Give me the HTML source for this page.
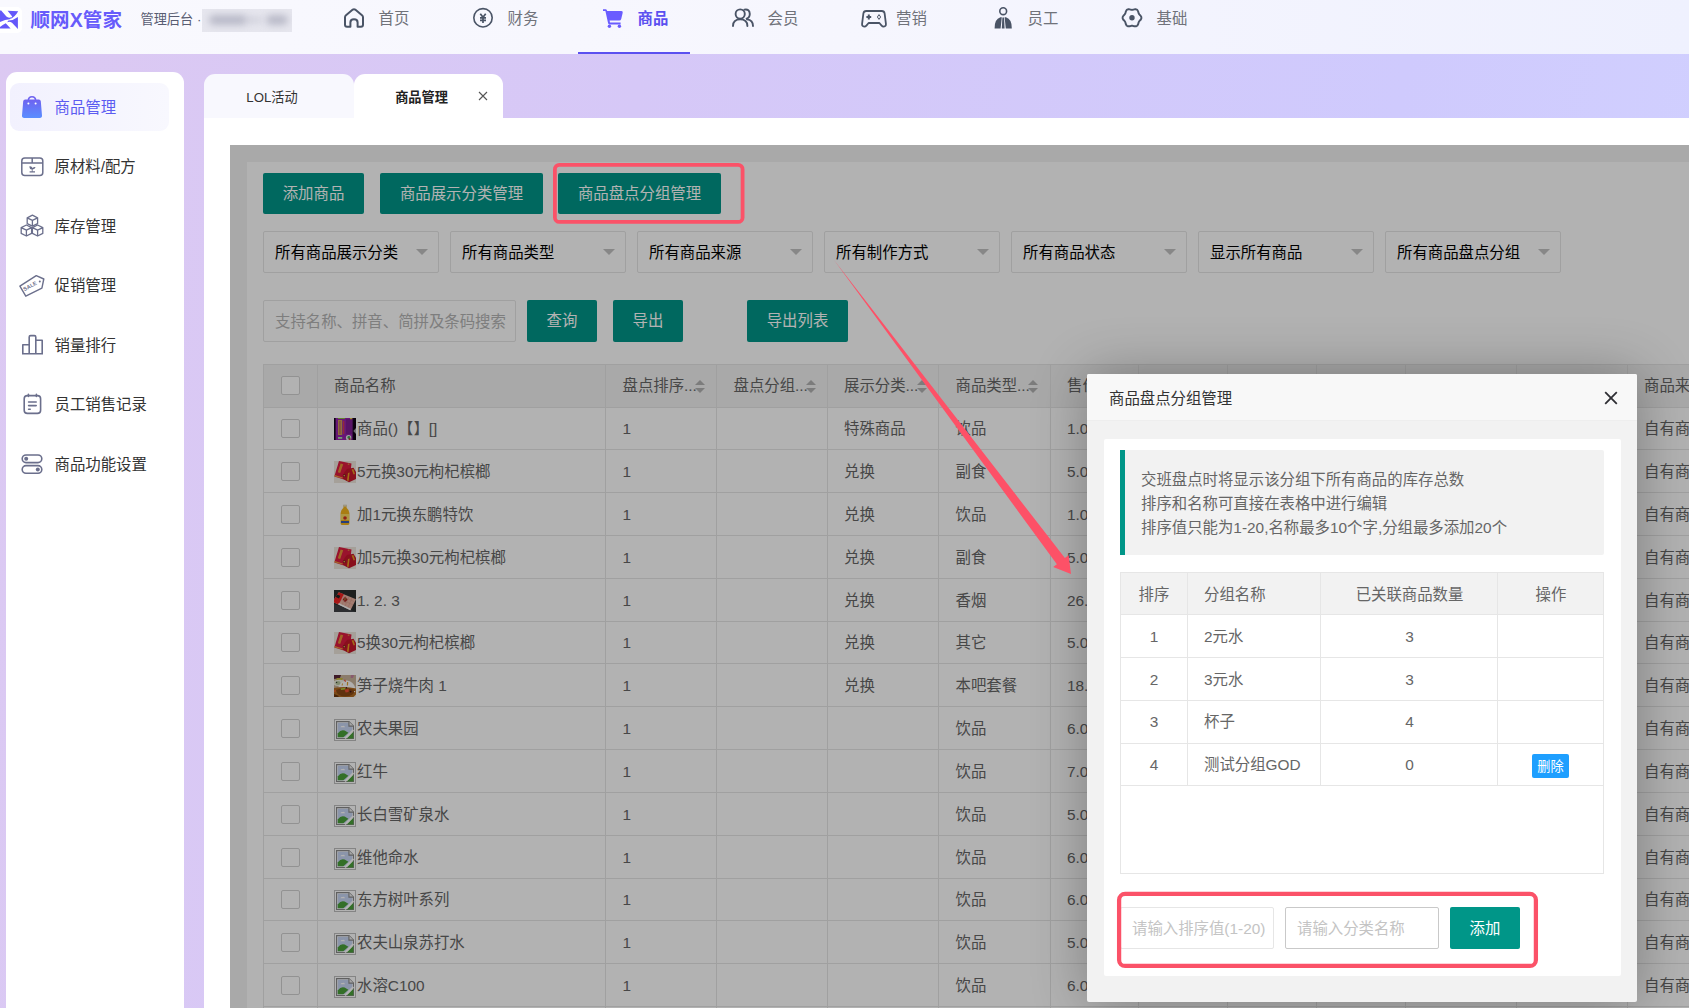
<!DOCTYPE html>
<html lang="zh-CN">
<head>
<meta charset="utf-8">
<title>顺网X管家 - 商品管理</title>
<style>
*{box-sizing:border-box;margin:0;padding:0}
html,body{width:1689px;height:1008px;overflow:hidden}
body{position:relative;font-family:"Liberation Sans","Noto Sans CJK SC",sans-serif;font-size:15.4px;color:#666;
background:linear-gradient(100deg,#dcc9f2 0%,#d6c8f7 35%,#cfcafd 76%,#d1d1ff 100%)}
.abs{position:absolute}
/* header */
#hdr{position:absolute;left:0;top:0;width:1689px;height:54px;background:linear-gradient(90deg,#f9f9fe 0%,#f6f6fe 50%,#eff1fe 100%)}
#logo{position:absolute;left:-4px;top:7px;width:25.600px;height:25.600px;background:#fff;border-radius:5px}
#brand{position:absolute;left:30.5px;top:4px;font-size:19.5px;font-weight:700;color:#675bfb;line-height:32px;letter-spacing:0.1px;white-space:nowrap}
#sub{position:absolute;left:140.5px;top:9.5px;font-size:13.2px;color:#585c72;line-height:20px;white-space:nowrap}
#blur{position:absolute;left:202px;top:9px;width:90px;height:23px;background:#e6e6ee;overflow:hidden}
#blur i{position:absolute;background:#b9bac8;filter:blur(3.5px);border-radius:6px}
.nav{position:absolute;top:0;height:54px;line-height:20px;font-size:15.4px;color:#70727a;white-space:nowrap}
.nav svg{position:absolute;left:0;top:6px}
.nav span{position:absolute;left:35.500px;top:9px}
.nav.on{color:#5b50f0;font-weight:700}
#navline{position:absolute;left:578px;top:52px;width:112px;height:2px;background:#5b50f0}
/* sidebar */
#side{position:absolute;left:6px;top:72px;width:178px;height:950px;background:#fff;border-radius:11px}
.si{position:absolute;left:4px;width:159px;height:48px;border-radius:9px;color:#333;font-size:15.4px;line-height:48px;white-space:nowrap}
.si span{position:absolute;left:44.5px;top:1px}
.si svg{position:absolute;left:9px;top:11.5px}
.si.on{background:linear-gradient(90deg,#f2f1fe,#f8f8fe);color:#5c5cf1}
/* tabs */
#tab1{position:absolute;left:204px;top:74px;width:150px;height:44px;background:#f8f8fe;border-radius:11px 11px 0 0;color:#333;font-size:13.2px;line-height:47px;text-align:center;padding-right:14px}
#tab2{position:absolute;left:354px;top:74px;width:149px;height:44px;background:#fff;border-radius:11px 11px 0 0;color:#222;font-size:13.2px;line-height:47px;font-weight:700;text-align:center;padding-right:14px}
#tabx{position:absolute;left:478px;top:91px}
#content{position:absolute;left:204px;top:118px;width:1485px;height:890px;background:#fff}
/* frame */
#frame{position:absolute;left:230px;top:145px;width:1459px;height:863px;background:#f2f2f2;overflow:hidden}
#fw{position:absolute;left:-230px;top:-145px;width:1689px;height:1008px}
#card{position:absolute;left:247px;top:162px;width:1500px;height:900px;background:#fff}
#shade{position:absolute;left:0;top:0;width:100%;height:100%;background:rgba(0,0,0,.3)}
.btn{position:absolute;height:42px;line-height:42px;background:#009688;color:#fff;font-size:15.4px;text-align:center;border-radius:2px;white-space:nowrap}
.sel{position:absolute;top:231px;width:176px;height:42px;border:1px solid #e6e6e6;border-radius:2px;background:#fff;color:#000;line-height:42px;padding-left:11px;white-space:nowrap}
.sel i{position:absolute;right:10px;top:17px;border:6.6px solid transparent;border-top-color:#c2c2c2;border-bottom:0}
#search{position:absolute;left:263px;top:300px;width:253px;height:42px;border:1px solid #e6e6e6;border-radius:2px;background:#fff;color:#b5b5b5;line-height:42px;padding-left:11px;white-space:nowrap;overflow:hidden}
/* table */
#thead{position:absolute;left:263px;top:364px;width:1500px;height:44px;background:#f2f2f2;border:1px solid #e6e6e6}
.vl{position:absolute;top:364px;width:1px;height:700px;background:#e6e6e6}
.hl{position:absolute;left:263px;width:1500px;height:1px;background:#e6e6e6}
.th{position:absolute;top:364px;height:44px;line-height:44.5px;color:#666;white-space:nowrap}
.td{position:absolute;height:43px;line-height:44px;color:#666;white-space:nowrap}
.cb{position:absolute;left:281px;width:19px;height:19px;border:1px solid #d2d2d2;border-radius:2px;background:#fff}
.sort{position:absolute;top:380px;width:11px;height:14px}
.sort:before{content:"";position:absolute;left:0;top:0;border:5.5px solid transparent;border-bottom-color:#b2b2b2;border-top:0}
.sort:after{content:"";position:absolute;left:0;top:8px;border:5.5px solid transparent;border-top-color:#b2b2b2;border-bottom:0}
.thumb{position:absolute;left:334px;width:22px;height:22px;overflow:hidden}
.brk{position:absolute;left:334px;width:22px;height:22px;border:1px solid #bdbdbd;background:#fff;overflow:hidden}
/* modal */
#modal{position:absolute;left:1087px;top:374px;width:550px;height:628px;background:#f2f2f2;box-shadow:1px 1px 55px rgba(0,0,0,.3);border-radius:2px}
#mtitle{position:absolute;left:0;top:0;width:550px;height:47px;background:#f8f8f8;border-bottom:1px solid #eee;line-height:49px;padding-left:22px;color:#333;font-size:15.4px;border-radius:2px 2px 0 0}
#mcard{position:absolute;left:17px;top:65px;width:517px;height:537px;background:#fff;border-radius:2px}
#quote{position:absolute;left:33px;top:76px;width:484px;height:105px;background:#f2f2f2;border-left:5.5px solid #009688;border-radius:0 2px 2px 0;padding:17.5px 0 0 16px;line-height:24px;color:#666;white-space:nowrap}
#mtbl{position:absolute;left:33px;top:198px;width:484px;height:302px;border:1px solid #e6e6e6;background:#fff}
#mth{position:absolute;left:0;top:0;width:482px;height:42px;background:#f2f2f2;border-bottom:1px solid #e6e6e6}
.mvl{position:absolute;top:0;width:1px;height:213px;background:#e6e6e6}
.mhl{position:absolute;left:0;width:482px;height:1px;background:#e6e6e6}
.mc{position:absolute;height:42px;line-height:44px;white-space:nowrap;color:#666}
.inp{position:absolute;top:533px;width:154px;height:42px;border:1px solid #e6e6e6;border-radius:2px;background:#fff;color:#c4c4c4;line-height:42px;padding-left:11px;white-space:nowrap;overflow:hidden}
</style>
</head>
<body>
<div id="hdr">
  <div id="logo"></div>
  <svg class="abs" style="left:-3px;top:9px" width="24" height="22" viewBox="-3 9 24 22">
    <path d="M-3 10.600 H1.200 L6.400 16.600 Q8.600 18.600 11.800 17 L9.800 19.200 Q4 19.600 -3 23.400 Z" fill="#6558fa"/>
    <path d="M7.600 10.800 L18.200 11.300 Q14.800 17.400 9.800 19.200 Q11.400 18 12.200 16.600 Z" fill="#6558fa"/>
    <path d="M17.900 17 V29 L12 22.800 Q9.600 21 7.200 22.200 L8.400 20.600 Q13.500 20.400 17.900 17 Z" fill="#6558fa"/>
    <path d="M-3 28.400 H10.600 L5.700 23.200 Q2 25 -1 28 Z" fill="#6558fa"/>
  </svg>
  <div id="brand">顺网X管家</div>
  <div id="sub">管理后台 ·</div>
  <div id="blur"><i style="left:7px;top:6px;width:38px;height:10px"></i><i style="left:64px;top:6px;width:22px;height:10px"></i><i style="left:44px;top:8px;width:16px;height:6px;opacity:.5"></i></div>

  <div class="nav" style="left:343px">
    <svg width="22" height="24" viewBox="0 0 22 24"><path d="M2 11.2 Q2 10 3 9.2 L9.8 3.6 Q11 2.7 12.2 3.6 L19 9.2 Q20 10 20 11.2 L20 18.8 Q20 20.8 18 20.8 L14.6 20.8 L14.6 16.4 Q14.6 13.2 11 13.2 Q7.4 13.2 7.4 16.4 L7.4 20.8 L4 20.8 Q2 20.8 2 18.8 Z" fill="none" stroke="#4a5466" stroke-width="2" stroke-linejoin="round"/></svg>
    <span>首页</span></div>
  <div class="nav" style="left:472px">
    <svg width="22" height="24" viewBox="0 0 22 24"><circle cx="11" cy="11.8" r="9.2" fill="none" stroke="#4a5466" stroke-width="1.6"/><path d="M8.3 7.8 L11 11.3 L13.7 7.8 M8 11.8 H14 M8 14.3 H14 M11 11.3 V17" fill="none" stroke="#4a5466" stroke-width="1.7"/></svg>
    <span>财务</span></div>
  <div class="nav on" style="left:602px">
    <svg width="24" height="24" viewBox="0 0 24 24"><path d="M1 3.2 H3.6 Q4.6 3.2 4.9 4.2 L5.2 5 H19.4 Q21.2 5 20.7 6.8 L19.2 13 Q18.8 14.5 17.2 14.5 H7.6 L8 16.6 H18.6 V18.4 H7.4 Q6.3 18.4 6.1 17.3 L3.4 5 H1 Z" fill="#6a5cff"/><circle cx="7.4" cy="20.2" r="1.7" fill="#6a5cff"/><circle cx="17.4" cy="20.2" r="1.7" fill="#6a5cff"/></svg>
    <span>商品</span></div>
  <div class="nav" style="left:731px">
    <svg width="24" height="24" viewBox="0 0 24 24"><g fill="none" stroke="#4a5466" stroke-width="1.9" stroke-linecap="round"><circle cx="9.2" cy="8" r="4.6"/><path d="M2 20 Q2 13.4 9.2 13.4 Q16.4 13.4 16.4 20"/><path d="M13.4 3.6 Q18.6 2.6 18.8 8 Q18.6 12 15.6 12.6"/><path d="M16 13.4 Q22 14 22 20"/></g></svg>
    <span style="left:36.500px">会员</span></div>
  <div class="nav" style="left:860.500px">
    <svg width="26" height="24" viewBox="0 0 26 24"><path d="M5.2 5 H20.8 Q23.2 5 23.6 7.4 L24.9 17.6 Q25.2 20.6 22.8 20.6 Q21.4 20.6 20.4 19.4 L18.4 17 H7.6 L5.6 19.4 Q4.6 20.6 3.2 20.6 Q0.8 20.6 1.1 17.6 L2.4 7.4 Q2.8 5 5.2 5 Z" fill="none" stroke="#4a5466" stroke-width="1.8" stroke-linejoin="round"/><path d="M5.4 11 H10.2 M7.8 8.6 V13.4" stroke="#4a5466" stroke-width="2" fill="none"/><path d="M18 8.6 L19.6 11 L18 13.4 L16.4 11 Z" fill="none" stroke="#4a5466" stroke-width="1"/></svg>
    <span>营销</span></div>
  <div class="nav" style="left:992px">
    <svg width="22" height="24" viewBox="0 0 22 24"><circle cx="11.2" cy="5.2" r="3.4" fill="none" stroke="#4a5466" stroke-width="1.6"/><path d="M8.4 11.2 L9.8 11.2 L8.6 22.4 H2.6 Q2.4 13 8.4 11.2 Z M14 11.2 L12.6 11.2 L13.8 22.4 H19.8 Q20 13 14 11.2 Z" fill="#4a5466"/><path d="M10.4 11.6 H12 L12.6 22.4 H9.8 Z" fill="#4a5466"/></svg>
    <span>员工</span></div>
  <div class="nav" style="left:1121px">
    <svg width="22" height="24" viewBox="0 0 22 24"><path d="M20.4 11.8 L20.3 12.6 L19.9 13.4 L19.4 14.1 L18.8 14.6 L18.3 15.2 L17.9 15.8 L17.6 16.4 L17.4 17.2 L17.2 18.0 L16.8 18.8 L16.4 19.5 L15.7 20.0 L15.0 20.3 L14.1 20.3 L13.3 20.2 L12.4 20.0 L11.7 19.8 L11.0 19.8 L10.3 19.8 L9.6 20.0 L8.7 20.2 L7.9 20.3 L7.0 20.3 L6.3 20.0 L5.6 19.5 L5.2 18.8 L4.8 18.0 L4.6 17.2 L4.4 16.4 L4.1 15.8 L3.7 15.2 L3.2 14.6 L2.6 14.1 L2.1 13.4 L1.7 12.6 L1.6 11.8 L1.7 11.0 L2.1 10.2 L2.6 9.5 L3.2 9.0 L3.7 8.4 L4.1 7.8 L4.4 7.2 L4.6 6.4 L4.8 5.6 L5.2 4.8 L5.6 4.1 L6.3 3.6 L7.0 3.3 L7.9 3.3 L8.7 3.4 L9.6 3.6 L10.3 3.8 L11.0 3.9 L11.7 3.8 L12.4 3.6 L13.3 3.4 L14.1 3.3 L15.0 3.3 L15.7 3.6 L16.4 4.1 L16.8 4.8 L17.2 5.6 L17.4 6.4 L17.6 7.2 L17.9 7.8 L18.3 8.4 L18.8 9.0 L19.4 9.5 L19.9 10.2 L20.3 11.0 Z" fill="none" stroke="#4a5466" stroke-width="1.900" stroke-linejoin="round"/><circle cx="11" cy="11.800" r="2.700" fill="#4a5466"/></svg>
    <span>基础</span></div>
  <div id="navline"></div>
</div>

<div id="side">
  <div class="si on" style="top:10.600px">
    <svg width="26" height="26" viewBox="0 0 26 26"><defs><linearGradient id="bg1" x1="0" y1="0" x2="0" y2="1"><stop offset="0" stop-color="#6e62f0"/><stop offset="1" stop-color="#5a8eff"/></linearGradient></defs><path d="M9.4 6.6 Q9.4 2.8 13 2.8 Q16.6 2.8 16.6 6.6" fill="none" stroke="#6e62f0" stroke-width="1.6"/><path d="M6.2 5.4 H19.8 Q21.6 5.4 21.8 7.2 L23 21.6 Q23.2 24 20.8 24 H5.2 Q2.8 24 3 21.6 L4.2 7.2 Q4.4 5.4 6.2 5.4 Z" fill="url(#bg1)"/><circle cx="9.4" cy="9.6" r="1" fill="#fff"/><circle cx="16.6" cy="9.6" r="1" fill="#fff"/></svg>
    <span>商品管理</span></div>
  <div class="si" style="top:70.100px">
    <svg width="26" height="26" viewBox="0 0 26 26"><g fill="none" stroke="#6b6f8c" stroke-width="1.5"><rect x="2.8" y="4" width="21" height="17.6" rx="3"/><path d="M2.8 9 H23.8 M13.2 4 V9"/></g><path d="M10.2 12.4 Q12.6 11.6 13.6 14 Q14.6 12.6 16.6 13 Q16 15.4 13.6 15.4 V17.2 H16 V18.4 H10.6 V17.2 H12.8 V15.4 Q10.4 15 10.2 12.4 Z" fill="#6b6f8c"/></svg>
    <span>原材料/配方</span></div>
  <div class="si" style="top:129.600px">
    <svg width="26" height="26" viewBox="0 0 26 26"><g fill="none" stroke="#6b6f8c" stroke-width="1.3" stroke-linejoin="round"><path d="M13.4 2.2 L18.6 4.8 V10.6 L13.4 13.2 L8.2 10.6 V4.8 Z M8.2 4.8 L13.4 7.4 L18.6 4.8 M13.4 7.4 V13.2"/><path d="M7.4 12 L12.6 14.6 V20.4 L7.4 23 L2.2 20.4 V14.6 Z M2.2 14.6 L7.4 17.2 L12.6 14.6 M7.4 17.2 V23"/><path d="M18.6 12 L23.8 14.6 V20.4 L18.6 23 L13.4 20.4 V14.6 Z M13.4 14.6 L18.6 17.2 L23.8 14.6 M18.6 17.2 V23"/></g></svg>
    <span>库存管理</span></div>
  <div class="si" style="top:189.100px">
    <svg width="28" height="26" viewBox="0 0 28 26"><path d="M0.900 13.150 L17.250 2.600 L24.800 6 L22.900 15.200 L6.800 23.200 Z" fill="none" stroke="#6b6f8c" stroke-width="1.400" stroke-linejoin="round"/><circle cx="20.800" cy="8.600" r="1" fill="#6b6f8c"/><text transform="translate(5.600 18.200) rotate(-29)" font-size="5.400" font-weight="700" fill="#6b6f8c" font-family="Liberation Sans,sans-serif">SALE</text></svg>
    <span>促销管理</span></div>
  <div class="si" style="top:248.600px">
    <svg width="28" height="26" viewBox="0 0 28 26"><path d="M3.800 21.800 V12.800 H10.200 M10.200 21.800 V5 Q10.200 3.600 11.600 3.600 H15.400 Q16.800 3.600 16.800 5 V21.800 M16.800 8.200 H23.200 V21.800 M3 21.800 H24" fill="none" stroke="#6b6f8c" stroke-width="1.600" stroke-linejoin="round"/></svg>
    <span>销量排行</span></div>
  <div class="si" style="top:307.600px">
    <svg width="26" height="26" viewBox="0 0 26 26"><g fill="none" stroke="#6b6f8c" stroke-width="1.6" stroke-linecap="round"><rect x="5.2" y="4.6" width="16.4" height="17.8" rx="3.2"/><path d="M9.4 3.2 V5.4 M17.4 3.2 V5.4 M9.6 11 H17.2 M9.6 14.6 H17.2 M9.6 18.2 H11.2"/></g></svg>
    <span>员工销售记录</span></div>
  <div class="si" style="top:367.600px">
    <svg width="26" height="26" viewBox="0 0 26 26"><g fill="none" stroke="#6b6f8c" stroke-width="1.6"><rect x="3.2" y="4" width="19.6" height="7.6" rx="3.8"/><rect x="3.2" y="14.6" width="19.6" height="7.6" rx="3.8"/></g><circle cx="7.2" cy="7.8" r="2" fill="#6b6f8c"/><circle cx="18.8" cy="18.4" r="2" fill="#6b6f8c"/></svg>
    <span>商品功能设置</span></div>
</div>

<div id="tab1">LOL活动</div>
<div id="tab2">商品管理</div>
<svg id="tabx" width="10" height="10" viewBox="0 0 10 10"><path d="M1 1 L9 9 M9 1 L1 9" stroke="#555" stroke-width="1.1"/></svg>
<div id="content"></div>
<div id="frame"><div id="fw">
<div id="card"></div>
<div class="btn" style="left:263px;top:173px;width:101px;height:41px">添加商品</div>
<div class="btn" style="left:380px;top:173px;width:163px;height:41px">商品展示分类管理</div>
<div class="btn" style="left:558px;top:173px;width:163px;height:41px">商品盘点分组管理</div>
<div class="sel" style="left:263px">所有商品展示分类<i></i></div>
<div class="sel" style="left:450px">所有商品类型<i></i></div>
<div class="sel" style="left:637px">所有商品来源<i></i></div>
<div class="sel" style="left:824px">所有制作方式<i></i></div>
<div class="sel" style="left:1011px">所有商品状态<i></i></div>
<div class="sel" style="left:1198px">显示所有商品<i></i></div>
<div class="sel" style="left:1385px">所有商品盘点分组<i></i></div>
<div id="search">支持名称、拼音、简拼及条码搜索</div>
<div class="btn" style="left:527px;top:300px;width:70px">查询</div>
<div class="btn" style="left:613px;top:300px;width:70px">导出</div>
<div class="btn" style="left:747px;top:300px;width:101px">导出列表</div>
<div id="thead"></div>
<div class="vl" style="left:263.0px"></div>
<div class="vl" style="left:317.0px"></div>
<div class="vl" style="left:605.0px"></div>
<div class="vl" style="left:716.0px"></div>
<div class="vl" style="left:827.0px"></div>
<div class="vl" style="left:938.0px"></div>
<div class="vl" style="left:1049.5px"></div>
<div class="vl" style="left:1137.5px"></div>
<div class="vl" style="left:1226.5px"></div>
<div class="vl" style="left:1315.5px"></div>
<div class="vl" style="left:1404.5px"></div>
<div class="vl" style="left:1516.0px"></div>
<div class="vl" style="left:1627.0px"></div>
<div class="hl" style="top:449px"></div>
<div class="hl" style="top:492px"></div>
<div class="hl" style="top:535px"></div>
<div class="hl" style="top:578px"></div>
<div class="hl" style="top:621px"></div>
<div class="hl" style="top:663px"></div>
<div class="hl" style="top:706px"></div>
<div class="hl" style="top:749px"></div>
<div class="hl" style="top:792px"></div>
<div class="hl" style="top:835px"></div>
<div class="hl" style="top:878px"></div>
<div class="hl" style="top:920px"></div>
<div class="hl" style="top:963px"></div>
<div class="hl" style="top:1006px"></div>
<div class="hl" style="top:1049px"></div>
<div class="cb" style="top:376px"></div>
<div class="th" style="left:334px">商品名称</div>
<div class="th" style="left:622.5px">盘点排序...</div>
<div class="sort" style="left:695px"></div>
<div class="th" style="left:733.5px">盘点分组...</div>
<div class="sort" style="left:806px"></div>
<div class="th" style="left:844px">展示分类...</div>
<div class="sort" style="left:917px"></div>
<div class="th" style="left:955.5px">商品类型...</div>
<div class="sort" style="left:1028px"></div>
<div class="th" style="left:1067px">售价</div>
<div class="th" style="left:1644px">商品来源</div>
<div class="cb" style="top:419.0px"></div>
<div class="thumb" style="top:418.0px"><svg width="22" height="22" viewBox="0 0 22 22"><defs><filter id="tb" x="-10%" y="-10%" width="120%" height="120%"><feGaussianBlur stdDeviation="0.45"/></filter></defs><rect width="22" height="22" fill="#12061a"/><g filter="url(#tb)"><rect x="1.600" y="0" width="18" height="22" fill="#9424aa"/><rect x="12" y="1" width="6" height="15" fill="#7e1c92"/><rect x="4" y="2" width="4.200" height="15" fill="#d8b048" opacity=".85"/><rect x="5.300" y="3" width="1.200" height="13" fill="#8a2a7a" opacity=".5"/><rect x="9.300" y="3" width="0.900" height="13" fill="#f0452c"/><rect x="4" y="0" width="7" height="1" fill="#8ab83c"/><rect x="16" y="0" width="2.400" height="1.200" fill="#e0c83c"/><rect x="4" y="19" width="4.200" height="1.800" fill="#a8d8a8"/><circle cx="14.600" cy="19.800" r="2.700" fill="#e4ece4"/><circle cx="14.800" cy="19.400" r="1.400" fill="#4a9a5a"/><circle cx="15.600" cy="21" r="1.100" fill="#b03030"/><rect x="18.500" y="0" width="3.500" height="22" fill="#0a0410" opacity=".85"/><path d="M22 10 L19.400 13 L22 16 Z" fill="#e8e8e8" opacity=".7"/></g></svg></div>
<div class="td" style="left:357px;top:407.0px">商品()【】[]</div>
<div class="td" style="left:622.5px;top:407.0px">1</div>
<div class="td" style="left:844px;top:407.0px">特殊商品</div>
<div class="td" style="left:955.5px;top:407.0px">饮品</div>
<div class="td" style="left:1067px;top:407.0px">1.00</div>
<div class="td" style="left:1644px;top:407.0px">自有商品</div>
<div class="cb" style="top:461.5px"></div>
<div class="thumb" style="top:460.5px"><svg width="22" height="22" viewBox="0 0 22 22"><rect width="22" height="22" fill="#ece5dc"/><g filter="url(#tb)"><path d="M5 0 L17.500 2.500 L15.600 17.500 L9 18.200 L0.300 15.500 Z" fill="#dc1a40"/><path d="M13 8 L19.500 6.800 L22 11 L22 18 L15 21.200 L9 18 L10 12 Z" fill="#c4142c"/><path d="M6.600 2.600 L9.200 3.200 L6.200 12 L3.800 11.300 Z" fill="#e8a838" opacity=".85"/><path d="M0.600 14 L8.800 16.400 L8.600 17.600 L0.400 15.300 Z" fill="#f0c040" opacity=".8"/><circle cx="10.300" cy="14.600" r="1.500" fill="#7a1420"/><circle cx="10.300" cy="14.600" r="0.900" fill="#dca040"/><path d="M14 12 L15.600 11.600 L14.600 20 L13 19.400 Z" fill="#eaa020"/><path d="M17.600 8.400 L19.400 8 L21 13 L19.600 13.600 Z" fill="#e89820"/><circle cx="14.600" cy="3.200" r="0.900" fill="#e0a040" opacity=".7"/></g></svg></div>
<div class="td" style="left:357px;top:449.5px">5元换30元枸杞槟榔</div>
<div class="td" style="left:622.5px;top:449.5px">1</div>
<div class="td" style="left:844px;top:449.5px">兑换</div>
<div class="td" style="left:955.5px;top:449.5px">副食</div>
<div class="td" style="left:1067px;top:449.5px">5.00</div>
<div class="td" style="left:1644px;top:449.5px">自有商品</div>
<div class="cb" style="top:504.5px"></div>
<div class="thumb" style="top:503.5px"><svg width="22" height="22" viewBox="0 0 22 22"><path d="M9.400 1 H12.600 V4 Q15.400 6 15.400 9 V19.600 Q15.400 21 14 21 H8 Q6.600 21 6.600 19.600 V9 Q6.600 6 9.400 4 Z" fill="#f2b41c"/><rect x="9.200" y="0.600" width="3.600" height="2" fill="#e0d8c0"/><rect x="7" y="10" width="8" height="6" fill="#f8d860"/><circle cx="11" cy="14" r="1.800" fill="#d03020"/><rect x="7" y="17" width="8" height="2" fill="#3858b0"/></svg></div>
<div class="td" style="left:357px;top:492.5px">加1元换东鹏特饮</div>
<div class="td" style="left:622.5px;top:492.5px">1</div>
<div class="td" style="left:844px;top:492.5px">兑换</div>
<div class="td" style="left:955.5px;top:492.5px">饮品</div>
<div class="td" style="left:1067px;top:492.5px">1.00</div>
<div class="td" style="left:1644px;top:492.5px">自有商品</div>
<div class="cb" style="top:547.5px"></div>
<div class="thumb" style="top:546.5px"><svg width="22" height="22" viewBox="0 0 22 22"><rect width="22" height="22" fill="#ece5dc"/><g filter="url(#tb)"><path d="M5 0 L17.500 2.500 L15.600 17.500 L9 18.200 L0.300 15.500 Z" fill="#dc1a40"/><path d="M13 8 L19.500 6.800 L22 11 L22 18 L15 21.200 L9 18 L10 12 Z" fill="#c4142c"/><path d="M6.600 2.600 L9.200 3.200 L6.200 12 L3.800 11.300 Z" fill="#e8a838" opacity=".85"/><path d="M0.600 14 L8.800 16.400 L8.600 17.600 L0.400 15.300 Z" fill="#f0c040" opacity=".8"/><circle cx="10.300" cy="14.600" r="1.500" fill="#7a1420"/><circle cx="10.300" cy="14.600" r="0.900" fill="#dca040"/><path d="M14 12 L15.600 11.600 L14.600 20 L13 19.400 Z" fill="#eaa020"/><path d="M17.600 8.400 L19.400 8 L21 13 L19.600 13.600 Z" fill="#e89820"/><circle cx="14.600" cy="3.200" r="0.900" fill="#e0a040" opacity=".7"/></g></svg></div>
<div class="td" style="left:357px;top:535.5px">加5元换30元枸杞槟榔</div>
<div class="td" style="left:622.5px;top:535.5px">1</div>
<div class="td" style="left:844px;top:535.5px">兑换</div>
<div class="td" style="left:955.5px;top:535.5px">副食</div>
<div class="td" style="left:1067px;top:535.5px">5.00</div>
<div class="td" style="left:1644px;top:535.5px">自有商品</div>
<div class="cb" style="top:590.5px"></div>
<div class="thumb" style="top:589.5px"><svg width="22" height="22" viewBox="0 0 22 22"><rect width="22" height="22" fill="#2a2f2f"/><g filter="url(#tb)"><path d="M0 14 L22 22 L0 22 Z" fill="#4a4a50" opacity=".7"/><path d="M4.800 2.200 L22 9.200 L16.500 20.300 L0 12.600 L0 9.400 Z" fill="#eab4a4"/><path d="M4.800 2.200 L9.900 4.300 L4.700 14.600 L0 12.600 L0 9.400 Z" fill="#f02424"/><path d="M3 4.600 L6.300 5.800 L5 8.400 L1.800 7 Z" fill="#1c2020"/><path d="M4.700 13 L16.800 18.800 L16.200 20.200 L4.200 14.500 Z" fill="#fafafa"/><path d="M11.100 6.600 L13.700 9.500 L11.100 12.400 L8.700 9.500 Z" fill="#a81c20"/><circle cx="11.200" cy="9.300" r="1" fill="#8a7a20"/><path d="M12 5.600 L8 14.800 M15 6.800 L11 16.200 M18 8 L14 17.600 M7 9.600 L19 14.800 M8.500 6.500 L20.500 11.700" stroke="#c88c7c" stroke-width="0.500" opacity=".8"/></g></svg></div>
<div class="td" style="left:357px;top:578.5px">1. 2. 3</div>
<div class="td" style="left:622.5px;top:578.5px">1</div>
<div class="td" style="left:844px;top:578.5px">兑换</div>
<div class="td" style="left:955.5px;top:578.5px">香烟</div>
<div class="td" style="left:1067px;top:578.5px">26.00</div>
<div class="td" style="left:1644px;top:578.5px">自有商品</div>
<div class="cb" style="top:633.0px"></div>
<div class="thumb" style="top:632.0px"><svg width="22" height="22" viewBox="0 0 22 22"><rect width="22" height="22" fill="#ece5dc"/><g filter="url(#tb)"><path d="M5 0 L17.500 2.500 L15.600 17.500 L9 18.200 L0.300 15.500 Z" fill="#dc1a40"/><path d="M13 8 L19.500 6.800 L22 11 L22 18 L15 21.200 L9 18 L10 12 Z" fill="#c4142c"/><path d="M6.600 2.600 L9.200 3.200 L6.200 12 L3.800 11.300 Z" fill="#e8a838" opacity=".85"/><path d="M0.600 14 L8.800 16.400 L8.600 17.600 L0.400 15.300 Z" fill="#f0c040" opacity=".8"/><circle cx="10.300" cy="14.600" r="1.500" fill="#7a1420"/><circle cx="10.300" cy="14.600" r="0.900" fill="#dca040"/><path d="M14 12 L15.600 11.600 L14.600 20 L13 19.400 Z" fill="#eaa020"/><path d="M17.600 8.400 L19.400 8 L21 13 L19.600 13.600 Z" fill="#e89820"/><circle cx="14.600" cy="3.200" r="0.900" fill="#e0a040" opacity=".7"/></g></svg></div>
<div class="td" style="left:357px;top:621.0px">5换30元枸杞槟榔</div>
<div class="td" style="left:622.5px;top:621.0px">1</div>
<div class="td" style="left:844px;top:621.0px">兑换</div>
<div class="td" style="left:955.5px;top:621.0px">其它</div>
<div class="td" style="left:1067px;top:621.0px">5.00</div>
<div class="td" style="left:1644px;top:621.0px">自有商品</div>
<div class="cb" style="top:675.5px"></div>
<div class="thumb" style="top:674.5px"><svg width="22" height="22" viewBox="0 0 22 22"><rect width="22" height="22" fill="#c8b29a"/><g filter="url(#tb)"><path d="M0 0 H7 L6 3 L0 4 Z" fill="#5a2838"/><path d="M3 3 H9 L8 5 H2 Z" fill="#c8b83c"/><path d="M17 0 H20 L19 3 H16.500 Z" fill="#c060a0" opacity=".6"/><path d="M0 6 Q5 3.600 10 5.600 L8 10.400 Q3 12 0 10 Z" fill="#eef0e4"/><ellipse cx="4" cy="8" rx="2.600" ry="1.900" fill="#b8c8a0"/><circle cx="2.600" cy="7.400" r="0.700" fill="#3a4030"/><path d="M4 12.600 Q8 4.600 13 5.600 Q19 6 21.600 13.400 L12 15 Z" fill="#fcfaf8"/><path d="M10 5 L11.200 4.600 L12 6.600 L11 7 Z" fill="#f05030"/><path d="M8 8.600 L9 8.600 L8.600 10.600 L7.600 10.600 Z M13 7 L14.200 7 L14 10.400 L12.800 10.400 Z" fill="#e0a030"/><path d="M0 13 Q11 10.600 22 13.400 V22 H0 Z" fill="#b06a22"/><path d="M2 15 Q10 11.600 21 15 Q20 21 11 21.600 Q3 21 2 15 Z" fill="#8a4a16"/><path d="M6.600 13.600 L11.400 12.800 L11 14.400 L7 15 Z" fill="#b4c83c"/><path d="M10.600 14.600 L14.800 14 L14.600 17 L11.600 17.400 Z" fill="#f05038"/><circle cx="16.600" cy="16.600" r="0.900" fill="#3a1420"/><circle cx="12.400" cy="12.800" r="0.700" fill="#3a1420"/><path d="M0 19 L5 21 L4 22 H0 Z" fill="#6a3410"/><path d="M0 15.600 L1.600 15 L2 16.400 L0 17 Z" fill="#f06030"/><circle cx="20.600" cy="16.600" r="0.700" fill="#fff"/><path d="M19.500 22 L22 19.600 V22 Z" fill="#f4efe6"/></g></svg></div>
<div class="td" style="left:357px;top:663.5px">笋子烧牛肉 1</div>
<div class="td" style="left:622.5px;top:663.5px">1</div>
<div class="td" style="left:844px;top:663.5px">兑换</div>
<div class="td" style="left:955.5px;top:663.5px">本吧套餐</div>
<div class="td" style="left:1067px;top:663.5px">18.00</div>
<div class="td" style="left:1644px;top:663.5px">自有商品</div>
<div class="cb" style="top:718.5px"></div>
<div class="brk" style="top:718.5px"><svg width="18" height="18" viewBox="0 0 16 16" style="position:absolute;left:1px;top:1px"><path d="M0.500 0.500 H11.500 L15.500 4.500 V15.500 H0.500 Z" fill="#fff" stroke="#8a8a8a"/><path d="M1.500 1.500 H11 L14.500 5 V10 L9 14.500 H1.500 Z" fill="#c8d6f4"/><path d="M11.500 0.500 V4.500 H15.500" fill="#eee" stroke="#8a8a8a"/><path d="M1.500 14.500 V11 Q5 6.500 9.500 9.500 L11 10.500 L6.500 14.500 Z" fill="#4aa03a"/><path d="M4 5.500 Q4.500 4 6 4.500 Q7.500 3.500 8 5.500 Z" fill="#fff"/><path d="M15.500 9.500 L9.500 15.500 H15.500 Z" fill="#4aa03a"/><path d="M15.500 8 L8 15.500" stroke="#fff" stroke-width="1.600"/></svg></div>
<div class="td" style="left:357px;top:706.5px">农夫果园</div>
<div class="td" style="left:622.5px;top:706.5px">1</div>
<div class="td" style="left:955.5px;top:706.5px">饮品</div>
<div class="td" style="left:1067px;top:706.5px">6.00</div>
<div class="td" style="left:1644px;top:706.5px">自有商品</div>
<div class="cb" style="top:761.5px"></div>
<div class="brk" style="top:761.5px"><svg width="18" height="18" viewBox="0 0 16 16" style="position:absolute;left:1px;top:1px"><path d="M0.500 0.500 H11.500 L15.500 4.500 V15.500 H0.500 Z" fill="#fff" stroke="#8a8a8a"/><path d="M1.500 1.500 H11 L14.500 5 V10 L9 14.500 H1.500 Z" fill="#c8d6f4"/><path d="M11.500 0.500 V4.500 H15.500" fill="#eee" stroke="#8a8a8a"/><path d="M1.500 14.500 V11 Q5 6.500 9.500 9.500 L11 10.500 L6.500 14.500 Z" fill="#4aa03a"/><path d="M4 5.500 Q4.500 4 6 4.500 Q7.500 3.500 8 5.500 Z" fill="#fff"/><path d="M15.500 9.500 L9.500 15.500 H15.500 Z" fill="#4aa03a"/><path d="M15.500 8 L8 15.500" stroke="#fff" stroke-width="1.600"/></svg></div>
<div class="td" style="left:357px;top:749.5px">红牛</div>
<div class="td" style="left:622.5px;top:749.5px">1</div>
<div class="td" style="left:955.5px;top:749.5px">饮品</div>
<div class="td" style="left:1067px;top:749.5px">7.00</div>
<div class="td" style="left:1644px;top:749.5px">自有商品</div>
<div class="cb" style="top:804.5px"></div>
<div class="brk" style="top:804.5px"><svg width="18" height="18" viewBox="0 0 16 16" style="position:absolute;left:1px;top:1px"><path d="M0.500 0.500 H11.500 L15.500 4.500 V15.500 H0.500 Z" fill="#fff" stroke="#8a8a8a"/><path d="M1.500 1.500 H11 L14.500 5 V10 L9 14.500 H1.500 Z" fill="#c8d6f4"/><path d="M11.500 0.500 V4.500 H15.500" fill="#eee" stroke="#8a8a8a"/><path d="M1.500 14.500 V11 Q5 6.500 9.500 9.500 L11 10.500 L6.500 14.500 Z" fill="#4aa03a"/><path d="M4 5.500 Q4.500 4 6 4.500 Q7.500 3.500 8 5.500 Z" fill="#fff"/><path d="M15.500 9.500 L9.500 15.500 H15.500 Z" fill="#4aa03a"/><path d="M15.500 8 L8 15.500" stroke="#fff" stroke-width="1.600"/></svg></div>
<div class="td" style="left:357px;top:792.5px">长白雪矿泉水</div>
<div class="td" style="left:622.5px;top:792.5px">1</div>
<div class="td" style="left:955.5px;top:792.5px">饮品</div>
<div class="td" style="left:1067px;top:792.5px">5.00</div>
<div class="td" style="left:1644px;top:792.5px">自有商品</div>
<div class="cb" style="top:847.5px"></div>
<div class="brk" style="top:847.5px"><svg width="18" height="18" viewBox="0 0 16 16" style="position:absolute;left:1px;top:1px"><path d="M0.500 0.500 H11.500 L15.500 4.500 V15.500 H0.500 Z" fill="#fff" stroke="#8a8a8a"/><path d="M1.500 1.500 H11 L14.500 5 V10 L9 14.500 H1.500 Z" fill="#c8d6f4"/><path d="M11.500 0.500 V4.500 H15.500" fill="#eee" stroke="#8a8a8a"/><path d="M1.500 14.500 V11 Q5 6.500 9.500 9.500 L11 10.500 L6.500 14.500 Z" fill="#4aa03a"/><path d="M4 5.500 Q4.500 4 6 4.500 Q7.500 3.500 8 5.500 Z" fill="#fff"/><path d="M15.500 9.500 L9.500 15.500 H15.500 Z" fill="#4aa03a"/><path d="M15.500 8 L8 15.500" stroke="#fff" stroke-width="1.600"/></svg></div>
<div class="td" style="left:357px;top:835.5px">维他命水</div>
<div class="td" style="left:622.5px;top:835.5px">1</div>
<div class="td" style="left:955.5px;top:835.5px">饮品</div>
<div class="td" style="left:1067px;top:835.5px">6.00</div>
<div class="td" style="left:1644px;top:835.5px">自有商品</div>
<div class="cb" style="top:890.0px"></div>
<div class="brk" style="top:890.0px"><svg width="18" height="18" viewBox="0 0 16 16" style="position:absolute;left:1px;top:1px"><path d="M0.500 0.500 H11.500 L15.500 4.500 V15.500 H0.500 Z" fill="#fff" stroke="#8a8a8a"/><path d="M1.500 1.500 H11 L14.500 5 V10 L9 14.500 H1.500 Z" fill="#c8d6f4"/><path d="M11.500 0.500 V4.500 H15.500" fill="#eee" stroke="#8a8a8a"/><path d="M1.500 14.500 V11 Q5 6.500 9.500 9.500 L11 10.500 L6.500 14.500 Z" fill="#4aa03a"/><path d="M4 5.500 Q4.500 4 6 4.500 Q7.500 3.500 8 5.500 Z" fill="#fff"/><path d="M15.500 9.500 L9.500 15.500 H15.500 Z" fill="#4aa03a"/><path d="M15.500 8 L8 15.500" stroke="#fff" stroke-width="1.600"/></svg></div>
<div class="td" style="left:357px;top:878.0px">东方树叶系列</div>
<div class="td" style="left:622.5px;top:878.0px">1</div>
<div class="td" style="left:955.5px;top:878.0px">饮品</div>
<div class="td" style="left:1067px;top:878.0px">6.00</div>
<div class="td" style="left:1644px;top:878.0px">自有商品</div>
<div class="cb" style="top:932.5px"></div>
<div class="brk" style="top:932.5px"><svg width="18" height="18" viewBox="0 0 16 16" style="position:absolute;left:1px;top:1px"><path d="M0.500 0.500 H11.500 L15.500 4.500 V15.500 H0.500 Z" fill="#fff" stroke="#8a8a8a"/><path d="M1.500 1.500 H11 L14.500 5 V10 L9 14.500 H1.500 Z" fill="#c8d6f4"/><path d="M11.500 0.500 V4.500 H15.500" fill="#eee" stroke="#8a8a8a"/><path d="M1.500 14.500 V11 Q5 6.500 9.500 9.500 L11 10.500 L6.500 14.500 Z" fill="#4aa03a"/><path d="M4 5.500 Q4.500 4 6 4.500 Q7.500 3.500 8 5.500 Z" fill="#fff"/><path d="M15.500 9.500 L9.500 15.500 H15.500 Z" fill="#4aa03a"/><path d="M15.500 8 L8 15.500" stroke="#fff" stroke-width="1.600"/></svg></div>
<div class="td" style="left:357px;top:920.5px">农夫山泉苏打水</div>
<div class="td" style="left:622.5px;top:920.5px">1</div>
<div class="td" style="left:955.5px;top:920.5px">饮品</div>
<div class="td" style="left:1067px;top:920.5px">5.00</div>
<div class="td" style="left:1644px;top:920.5px">自有商品</div>
<div class="cb" style="top:975.5px"></div>
<div class="brk" style="top:975.5px"><svg width="18" height="18" viewBox="0 0 16 16" style="position:absolute;left:1px;top:1px"><path d="M0.500 0.500 H11.500 L15.500 4.500 V15.500 H0.500 Z" fill="#fff" stroke="#8a8a8a"/><path d="M1.500 1.500 H11 L14.500 5 V10 L9 14.500 H1.500 Z" fill="#c8d6f4"/><path d="M11.500 0.500 V4.500 H15.500" fill="#eee" stroke="#8a8a8a"/><path d="M1.500 14.500 V11 Q5 6.500 9.500 9.500 L11 10.500 L6.500 14.500 Z" fill="#4aa03a"/><path d="M4 5.500 Q4.500 4 6 4.500 Q7.500 3.500 8 5.500 Z" fill="#fff"/><path d="M15.500 9.500 L9.500 15.500 H15.500 Z" fill="#4aa03a"/><path d="M15.500 8 L8 15.500" stroke="#fff" stroke-width="1.600"/></svg></div>
<div class="td" style="left:357px;top:963.5px">水溶C100</div>
<div class="td" style="left:622.5px;top:963.5px">1</div>
<div class="td" style="left:955.5px;top:963.5px">饮品</div>
<div class="td" style="left:1067px;top:963.5px">6.00</div>
<div class="td" style="left:1644px;top:963.5px">自有商品</div>
<div id="shade" style="left:230px;top:145px;width:1459px;height:863px"></div>
</div></div>
<div id="modal">
  <div id="mtitle">商品盘点分组管理</div>
  <svg class="abs" style="left:517px;top:17px" width="14" height="14" viewBox="0 0 14 14"><path d="M1.2 1.200 L12.800 12.800 M12.800 1.200 L1.200 12.800" stroke="#2e2e33" stroke-width="1.800"/></svg>
  <div id="mcard"></div>
  <div id="quote">交班盘点时将显示该分组下所有商品的库存总数<br>排序和名称可直接在表格中进行编辑<br>排序值只能为1-20,名称最多10个字,分组最多添加20个</div>
  <div id="mtbl">
    <div id="mth"></div>
    <div class="mvl" style="left:66px"></div>
    <div class="mvl" style="left:199px"></div>
    <div class="mvl" style="left:376px"></div>
    <div class="mhl" style="top:84.200px"></div>
    <div class="mhl" style="top:127px"></div>
    <div class="mhl" style="top:169.700px"></div>
    <div class="mhl" style="top:212.300px"></div>
    <div class="mc" style="left:0;top:0;width:66px;text-align:center">排序</div>
    <div class="mc" style="left:83px;top:0">分组名称</div>
    <div class="mc" style="left:200px;top:0;width:177px;text-align:center">已关联商品数量</div>
    <div class="mc" style="left:377px;top:0;width:106px;text-align:center">操作</div>

    <div class="mc" style="left:0;top:42.400px;width:66px;text-align:center">1</div>
    <div class="mc" style="left:83px;top:42.400px">2元水</div>
    <div class="mc" style="left:200px;top:42.400px;width:177px;text-align:center">3</div>

    <div class="mc" style="left:0;top:85px;width:66px;text-align:center">2</div>
    <div class="mc" style="left:83px;top:85px">3元水</div>
    <div class="mc" style="left:200px;top:85px;width:177px;text-align:center">3</div>

    <div class="mc" style="left:0;top:127.400px;width:66px;text-align:center">3</div>
    <div class="mc" style="left:83px;top:127.400px">杯子</div>
    <div class="mc" style="left:200px;top:127.400px;width:177px;text-align:center">4</div>

    <div class="mc" style="left:0;top:170px;width:66px;text-align:center">4</div>
    <div class="mc" style="left:83px;top:170px">测试分组GOD</div>
    <div class="mc" style="left:200px;top:170px;width:177px;text-align:center">0</div>
    <div class="abs" style="left:411px;top:180.500px;width:37px;height:24.200px;background:#1e9fff;border-radius:2px;color:#fff;font-size:13.200px;line-height:26px;text-align:center;white-space:nowrap">删除</div>
  </div>
  <div class="inp" style="left:33px">请输入排序值(1-20)</div>
  <div class="inp" style="left:198px;border-color:#c9c9c9;padding-left:11px">请输入分类名称</div>
  <div class="btn" style="left:363px;top:533px;width:70px;line-height:43px">添加</div>
</div>
<svg class="abs" style="left:0;top:0;pointer-events:none" width="1689" height="1008" viewBox="0 0 1689 1008">
  <rect x="554.900" y="164.900" width="187.700" height="57" rx="4.500" fill="none" stroke="#fb5268" stroke-width="3.800"/>
  <rect x="1119.100" y="893.900" width="416.800" height="72" rx="6" fill="none" stroke="#fb5268" stroke-width="4.250"/>
  <path d="M834 260 L1064.900 558.100 L1068.600 555.300 L1071 574.100 L1053.200 567 L1056.900 564.200 Z" fill="#fd5167"/>
</svg>
</body>
</html>
